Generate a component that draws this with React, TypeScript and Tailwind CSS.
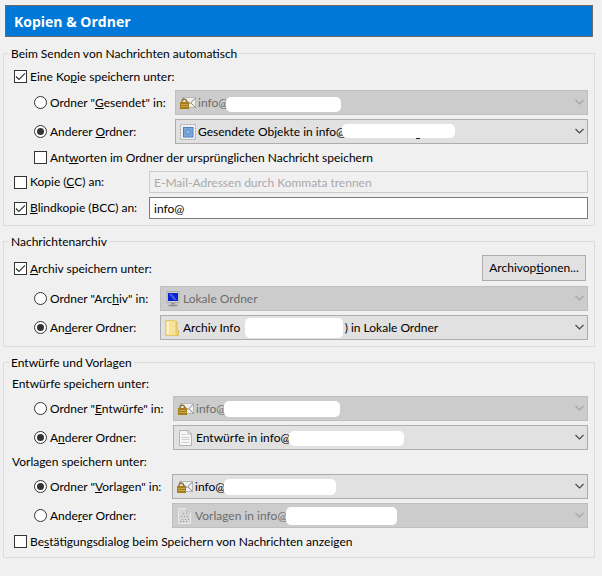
import type { ReactNode } from "react";

function CheckBox({ id, checked, children }: { id: string; checked?: boolean; children: ReactNode }) {
  return (
    <div className="flex items-center gap-[3px]">
      <span className="grid size-[13px] shrink-0">
        <input
          id={id}
          type="checkbox"
          defaultChecked={checked}
          className="peer col-start-1 row-start-1 size-[13px] appearance-none border border-[#333] bg-white"
        />
        <svg
          viewBox="0 0 13 13"
          className="pointer-events-none invisible col-start-1 row-start-1 size-[13px] peer-checked:visible"
          fill="none"
          stroke="#333"
          strokeWidth="1.2"
        >
          <path d="M2 6.500 4.900 9.400 11 3.300" />
        </svg>
      </span>
      <label htmlFor={id} className="whitespace-nowrap">{children}</label>
    </div>
  );
}

function Radio({ id, name, checked, children }: { id: string; name: string; checked?: boolean; children: ReactNode }) {
  return (
    <div className="flex items-center gap-[3px]">
      <input
        id={id}
        name={name}
        type="radio"
        defaultChecked={checked}
        className="grid size-[13px] shrink-0 appearance-none place-items-center rounded-full border border-[#333] bg-white before:size-[7px] before:rounded-full checked:before:bg-[#333]"
      />
      <label htmlFor={id} className="whitespace-nowrap">{children}</label>
    </div>
  );
}

function Combo({ label, text, icon, disabled, children }: { label: string; text: string; icon: ReactNode; disabled?: boolean; children?: ReactNode }) {
  return (
    <div className="relative h-[25px] min-w-0">
      <select
        aria-label={label}
        disabled={disabled}
        className="block h-full w-full appearance-none border border-[#adadad] bg-[#e1e1e1] pr-6 pl-[22px] text-black disabled:border-[#bfbfbf] disabled:bg-[#ccc] disabled:text-[#6d6d6d] disabled:opacity-100"
      >
        <option>{text}</option>
      </select>
      <span className="pointer-events-none absolute top-[5px] left-[5px]">{icon}</span>
      <svg
        viewBox="0 0 9 6"
        className={`pointer-events-none absolute top-[9px] right-1 h-[6px] w-[9px] ${disabled ? "text-[#a3a3a3]" : "text-[#444]"}`}
        fill="none"
        stroke="currentColor"
        strokeWidth="1.1"
      >
        <path d="M.5 1 4.500 5 8.500 1" />
      </svg>
      {children}
    </div>
  );
}

function Mask({ place }: { place: string }) {
  return <span className={`pointer-events-none absolute rounded-[5px] bg-white ${place}`} />;
}

function LockedMail() {
  return (
    <svg viewBox="0 0 16 16" className="size-4">
      <rect x="2.500" y="2.500" width="13" height="10" fill="#efefef" stroke="#b8b8b8" />
      <path d="M3 3 10 8.500 15.500 3M15.500 12.500 11 8" fill="none" stroke="#7c7c7c" strokeWidth=".9" />
      <path d="M2 8V6.500a2.300 2.300 0 0 1 4.600 0V8" fill="#ddd" stroke="#8c7330" strokeWidth="1.300" />
      <rect x="0" y="7" width="9" height="7" fill="#a87e1c" />
      <path d="M1 9.500h7M1 11.500h7" stroke="#d0b05a" strokeWidth=".8" />
    </svg>
  );
}

function Stamp() {
  return (
    <svg viewBox="0 0 16 16" className="size-4">
      <rect width="16" height="16" fill="#f0f0f0" />
      <rect x=".5" y=".5" width="15" height="15" fill="none" stroke="#a2a2a2" strokeDasharray="2 1" />
      <rect x="3.500" y="3.500" width="9.500" height="9.500" fill="#7ea8da" stroke="#4e82c0" />
      <circle cx="8.200" cy="8.200" r="2.700" fill="#86aede" stroke="#5f91ce" />
    </svg>
  );
}

function Computer() {
  return (
    <svg viewBox="0 0 16 16" className="size-4">
      <rect x="2" y=".5" width="12" height="11" fill="#d4d4cc" stroke="#aaa" />
      <rect x="3" y="2" width="10" height="8" fill="#0a1fd0" />
      <path d="M4 3h3l5 6H9z" fill="#3b5fe6" />
      <path d="M6 12h4v1.500H6z" fill="#999" />
      <path d="M3.500 14.500h9" stroke="#8d8d88" strokeWidth="1.500" />
    </svg>
  );
}

function Folder() {
  return (
    <svg viewBox="0 0 16 16" className="size-4">
      <path d="M8 1.500h4V9l1.500 1.500v5H8z" fill="#efd37a" stroke="#dcbb5b" />
      <path d="M.5.5H9l2 1v14H.5z" fill="#f8e29a" stroke="#e4c668" />
      <path d="M3 2v12" stroke="#fff2c0" strokeWidth="2" />
    </svg>
  );
}

function Page({ dotted }: { dotted?: boolean }) {
  return (
    <svg viewBox="0 0 16 16" className="size-4">
      <path
        d="M1.500.5H10L13.500 4v11.500h-12z"
        fill={dotted ? "#d6d6d6" : "#f6f6f6"}
        stroke={dotted ? "#e8e8e8" : "#b4b4b4"}
      />
      <path d="M10 .5V4h3.500" fill="none" stroke="#b4b4b4" />
      {dotted ? (
        <path d="M6 5.500h5M4 8.500h8M5 11.500h8M3 13.500h9" stroke="#999" strokeDasharray="1 2" />
      ) : (
        <path d="M3.500 4.500h4M3.500 7.500h8M3.500 9.500h8M3.500 12.500h8" stroke="#cfcfcf" />
      )}
    </svg>
  );
}

function Group({ title, children }: { title: string; children: ReactNode }) {
  return (
    <fieldset className="min-w-0 border border-[#dcdcdc] px-[5px]">
      <legend className="px-0.5 leading-[17px]">{title}</legend>
      <div className="flex flex-col gap-1 pt-[5px] pr-px pb-[6px] pl-[3px]">{children}</div>
    </fieldset>
  );
}

export default function App() {
  return (
    <main className="min-h-screen bg-[#f0f0f0] pt-[5px] pr-[7px] pb-4 pl-[3px] font-[Lato,'Noto_Sans',sans-serif] text-[12px] leading-4 text-black">
      <h1 className="mr-0.5 ml-0.5 flex h-8 items-center border border-[#6b6b6b] bg-[#0078d7] px-2 pt-0.5 font-['Open_Sans','Noto_Sans',sans-serif] text-[14px] font-bold text-white">
        Kopien &amp; Ordner
      </h1>
      <form className="mt-2 flex flex-col gap-[7px]">
        <Group title="Beim Senden von Nachrichten automatisch">
          <div className="flex h-[19px] items-center pl-0.5">
            <CheckBox id="copy" checked>Eine Ko<u>p</u>ie speichern unter:</CheckBox>
          </div>
          <div className="grid grid-cols-[141px_minmax(0,1fr)] gap-y-1 pl-[22px]">
            <Radio id="sent-account" name="sent">Ordner "<u>G</u>esendet" in:</Radio>
            <Combo label="Konto für Gesendet" text="info@" icon={<LockedMail />} disabled>
              <Mask place="left-[51px] top-[7px] h-[15px] w-[115px]" />
            </Combo>
            <Radio id="sent-other" name="sent" checked>Anderer <u>O</u>rdner:</Radio>
            <Combo label="Ordner für gesendete Nachrichten" text="Gesendete Objekte in info@" icon={<Stamp />}>
              <Mask place="left-[167px] top-[5px] h-[14px] w-[113px]" />
              <span className="pointer-events-none absolute top-[19px] left-[241px] h-px w-1 bg-[#222]" />
            </Combo>
          </div>
          <div className="flex h-[19px] items-center pl-[22px]">
            <CheckBox id="replies">Ant<u>w</u>orten im Ordner der ursprünglichen Nachricht speichern</CheckBox>
          </div>
          <div className="grid grid-cols-[135px_minmax(0,1fr)] gap-y-1 pl-0.5">
            <CheckBox id="cc">Kopie (<u>C</u>C) an:</CheckBox>
            <input
              type="text"
              disabled
              aria-label="Kopie (CC) an"
              placeholder="E-Mail-Adressen durch Kommata trennen"
              className="h-[22px] min-w-0 border border-[#ccc] bg-[#f0f0f0] px-1 placeholder:text-[#a9a9a9]"
            />
            <CheckBox id="bcc" checked><u>B</u>lindkopie (BCC) an:</CheckBox>
            <input
              type="text"
              aria-label="Blindkopie (BCC) an"
              defaultValue="info@"
              className="h-[22px] min-w-0 border border-[#7a7a7a] bg-white px-1"
            />
          </div>
        </Group>

        <Group title="Nachrichtenarchiv">
          <div className="flex h-[27px] items-center justify-between pr-0.5 pl-0.5">
            <CheckBox id="archive" checked><u>A</u>rchiv speichern unter:</CheckBox>
            <button type="button" className="h-[26px] w-[104px] self-start border border-[#adadad] bg-[#e1e1e1] whitespace-nowrap">
              Archivop<u>t</u>ionen...
            </button>
          </div>
          <div className="grid grid-cols-[126px_minmax(0,1fr)] gap-y-1 pl-[22px]">
            <Radio id="archive-account" name="archive">Ordner "Arc<u>h</u>iv" in:</Radio>
            <Combo label="Konto für Archiv" text="Lokale Ordner" icon={<Computer />} disabled />
            <Radio id="archive-other" name="archive" checked>An<u>d</u>erer Ordner:</Radio>
            <Combo
              label="Archivordner"
              text={"Archiv Info " + "\u00a0".repeat(33) + ") in Lokale Ordner"}
              icon={<Folder />}
            >
              <Mask place="left-[85px] top-[3px] h-[20px] w-[98px]" />
            </Combo>
          </div>
        </Group>

        <Group title="Entwürfe und Vorlagen">
          <p>Entwürfe speichern unter:</p>
          <div className="grid grid-cols-[139px_minmax(0,1fr)] gap-y-1 pl-[22px]">
            <Radio id="drafts-account" name="drafts">Ordner "<u>E</u>ntwürfe" in:</Radio>
            <Combo label="Konto für Entwürfe" text="info@" icon={<LockedMail />} disabled>
              <Mask place="left-[51px] top-[5px] h-[16px] w-[116px]" />
            </Combo>
            <Radio id="drafts-other" name="drafts" checked>A<u>n</u>derer Ordner:</Radio>
            <Combo label="Entwurfsordner" text="Entwürfe in info@" icon={<Page />}>
              <Mask place="left-[116px] top-[6px] h-[15px] w-[115px]" />
            </Combo>
          </div>
          <p>Vorlagen speichern unter:</p>
          <div className="grid grid-cols-[138px_minmax(0,1fr)] gap-y-1 pl-[22px]">
            <Radio id="templates-account" name="templates" checked>Ordner "<u>V</u>orlagen" in:</Radio>
            <Combo label="Konto für Vorlagen" text="info@" icon={<LockedMail />}>
              <Mask place="left-[52px] top-[5px] h-[16px] w-[112px]" />
            </Combo>
            <Radio id="templates-other" name="templates">Ande<u>r</u>er Ordner:</Radio>
            <Combo label="Vorlagenordner" text="Vorlagen in info@" icon={<Page dotted />} disabled>
              <Mask place="left-[114px] top-[4px] h-[18px] w-[111px]" />
            </Combo>
          </div>
          <div className="flex h-[19px] items-center pl-0.5">
            <CheckBox id="confirm">Be<u>s</u>tätigungsdialog beim Speichern von Nachrichten anzeigen</CheckBox>
          </div>
        </Group>
      </form>
    </main>
  );
}
